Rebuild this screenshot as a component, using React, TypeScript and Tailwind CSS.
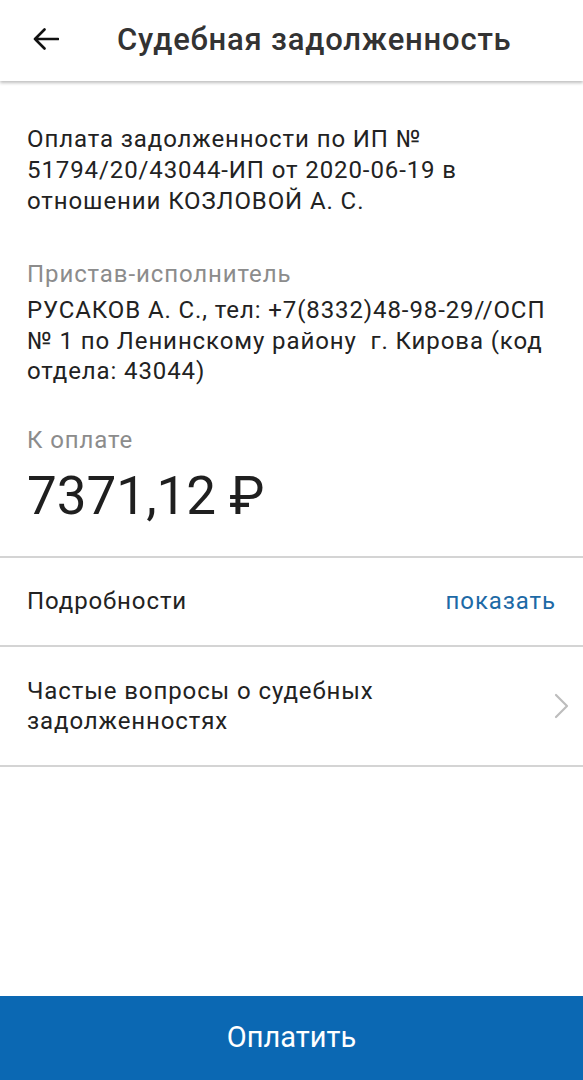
import React from "react";

export default function App() {
  return (
    <div
      className="flex h-[1080px] w-full flex-col bg-white text-[#222222]"
      style={{ fontFamily: "Roboto, 'Noto Sans', sans-serif" }}
    >
      <header className="relative z-10 flex h-[81px] shrink-0 items-center bg-white pb-[3px] shadow-[0_2px_3px_rgba(0,0,0,0.25)]">
        <div className="flex w-[117px] items-center pl-[33px]">
          <svg width="26" height="22" viewBox="0 0 26 22" fill="none">
            <path
              d="M25 11H2M11.5 1.5L2 11l9.5 9.5"
              stroke="#111"
              strokeWidth="2.6"
              strokeLinecap="round"
              strokeLinejoin="round"
            />
          </svg>
        </div>
        <h1 className="text-[31px] font-medium leading-none tracking-[0.8px] text-[#333]">
          Судебная задолженность
        </h1>
      </header>

      <main className="flex flex-1 flex-col">
        <section className="px-[27px] pt-[43px] pb-[28px] text-[24px] leading-[31px] tracking-[0.9px]">
          <p>
            Оплата задолженности по ИП №
            <br />
            51794/20/43044-ИП от 2020-06-19 в
            <br />
            отношении КОЗЛОВОЙ А. С.
          </p>
          <p className="mt-[42px] text-[#8c8c8c]">Пристав-исполнитель</p>
          <p className="mt-[5px] leading-[30.5px]">
            РУСАКОВ А. С., тел: +7(8332)48-98-29//ОСП
            <br />
            № 1 по Ленинскому району&nbsp; г. Кирова (код
            <br />
            отдела: 43044)
          </p>
          <p className="mt-[38px] text-[#8c8c8c]">К оплате</p>
          <p className="mt-[8px] text-[53px] leading-[64px] tracking-normal text-[#1f1f1f]">
            7371,12 ₽
          </p>
        </section>

        <div className="h-[2px] bg-[#d4d4d4]" />

        <div className="flex h-[87px] items-center justify-between px-[27px] text-[24px] tracking-[0.9px]">
          <span>Подробности</span>
          <span className="text-[#1d6aa6]">показать</span>
        </div>

        <div className="h-[2px] bg-[#d4d4d4]" />

        <div className="flex h-[118px] items-center justify-between pl-[27px] pr-[13px] text-[24px] leading-[30px] tracking-[0.9px]">
          <span>
            Частые вопросы о судебных
            <br />
            задолженностях
          </span>
          <svg width="16" height="26" viewBox="0 0 16 26" fill="none">
            <path
              d="M2 2l11 11L2 24"
              stroke="#bdbdbd"
              strokeWidth="2.2"
              strokeLinecap="round"
              strokeLinejoin="round"
            />
          </svg>
        </div>

        <div className="h-[2px] bg-[#d4d4d4]" />

        <button className="mt-auto flex h-[84px] w-full items-center justify-center bg-[#0b68b3] text-[29px] text-white">
          Оплатить
        </button>
      </main>
    </div>
  );
}
